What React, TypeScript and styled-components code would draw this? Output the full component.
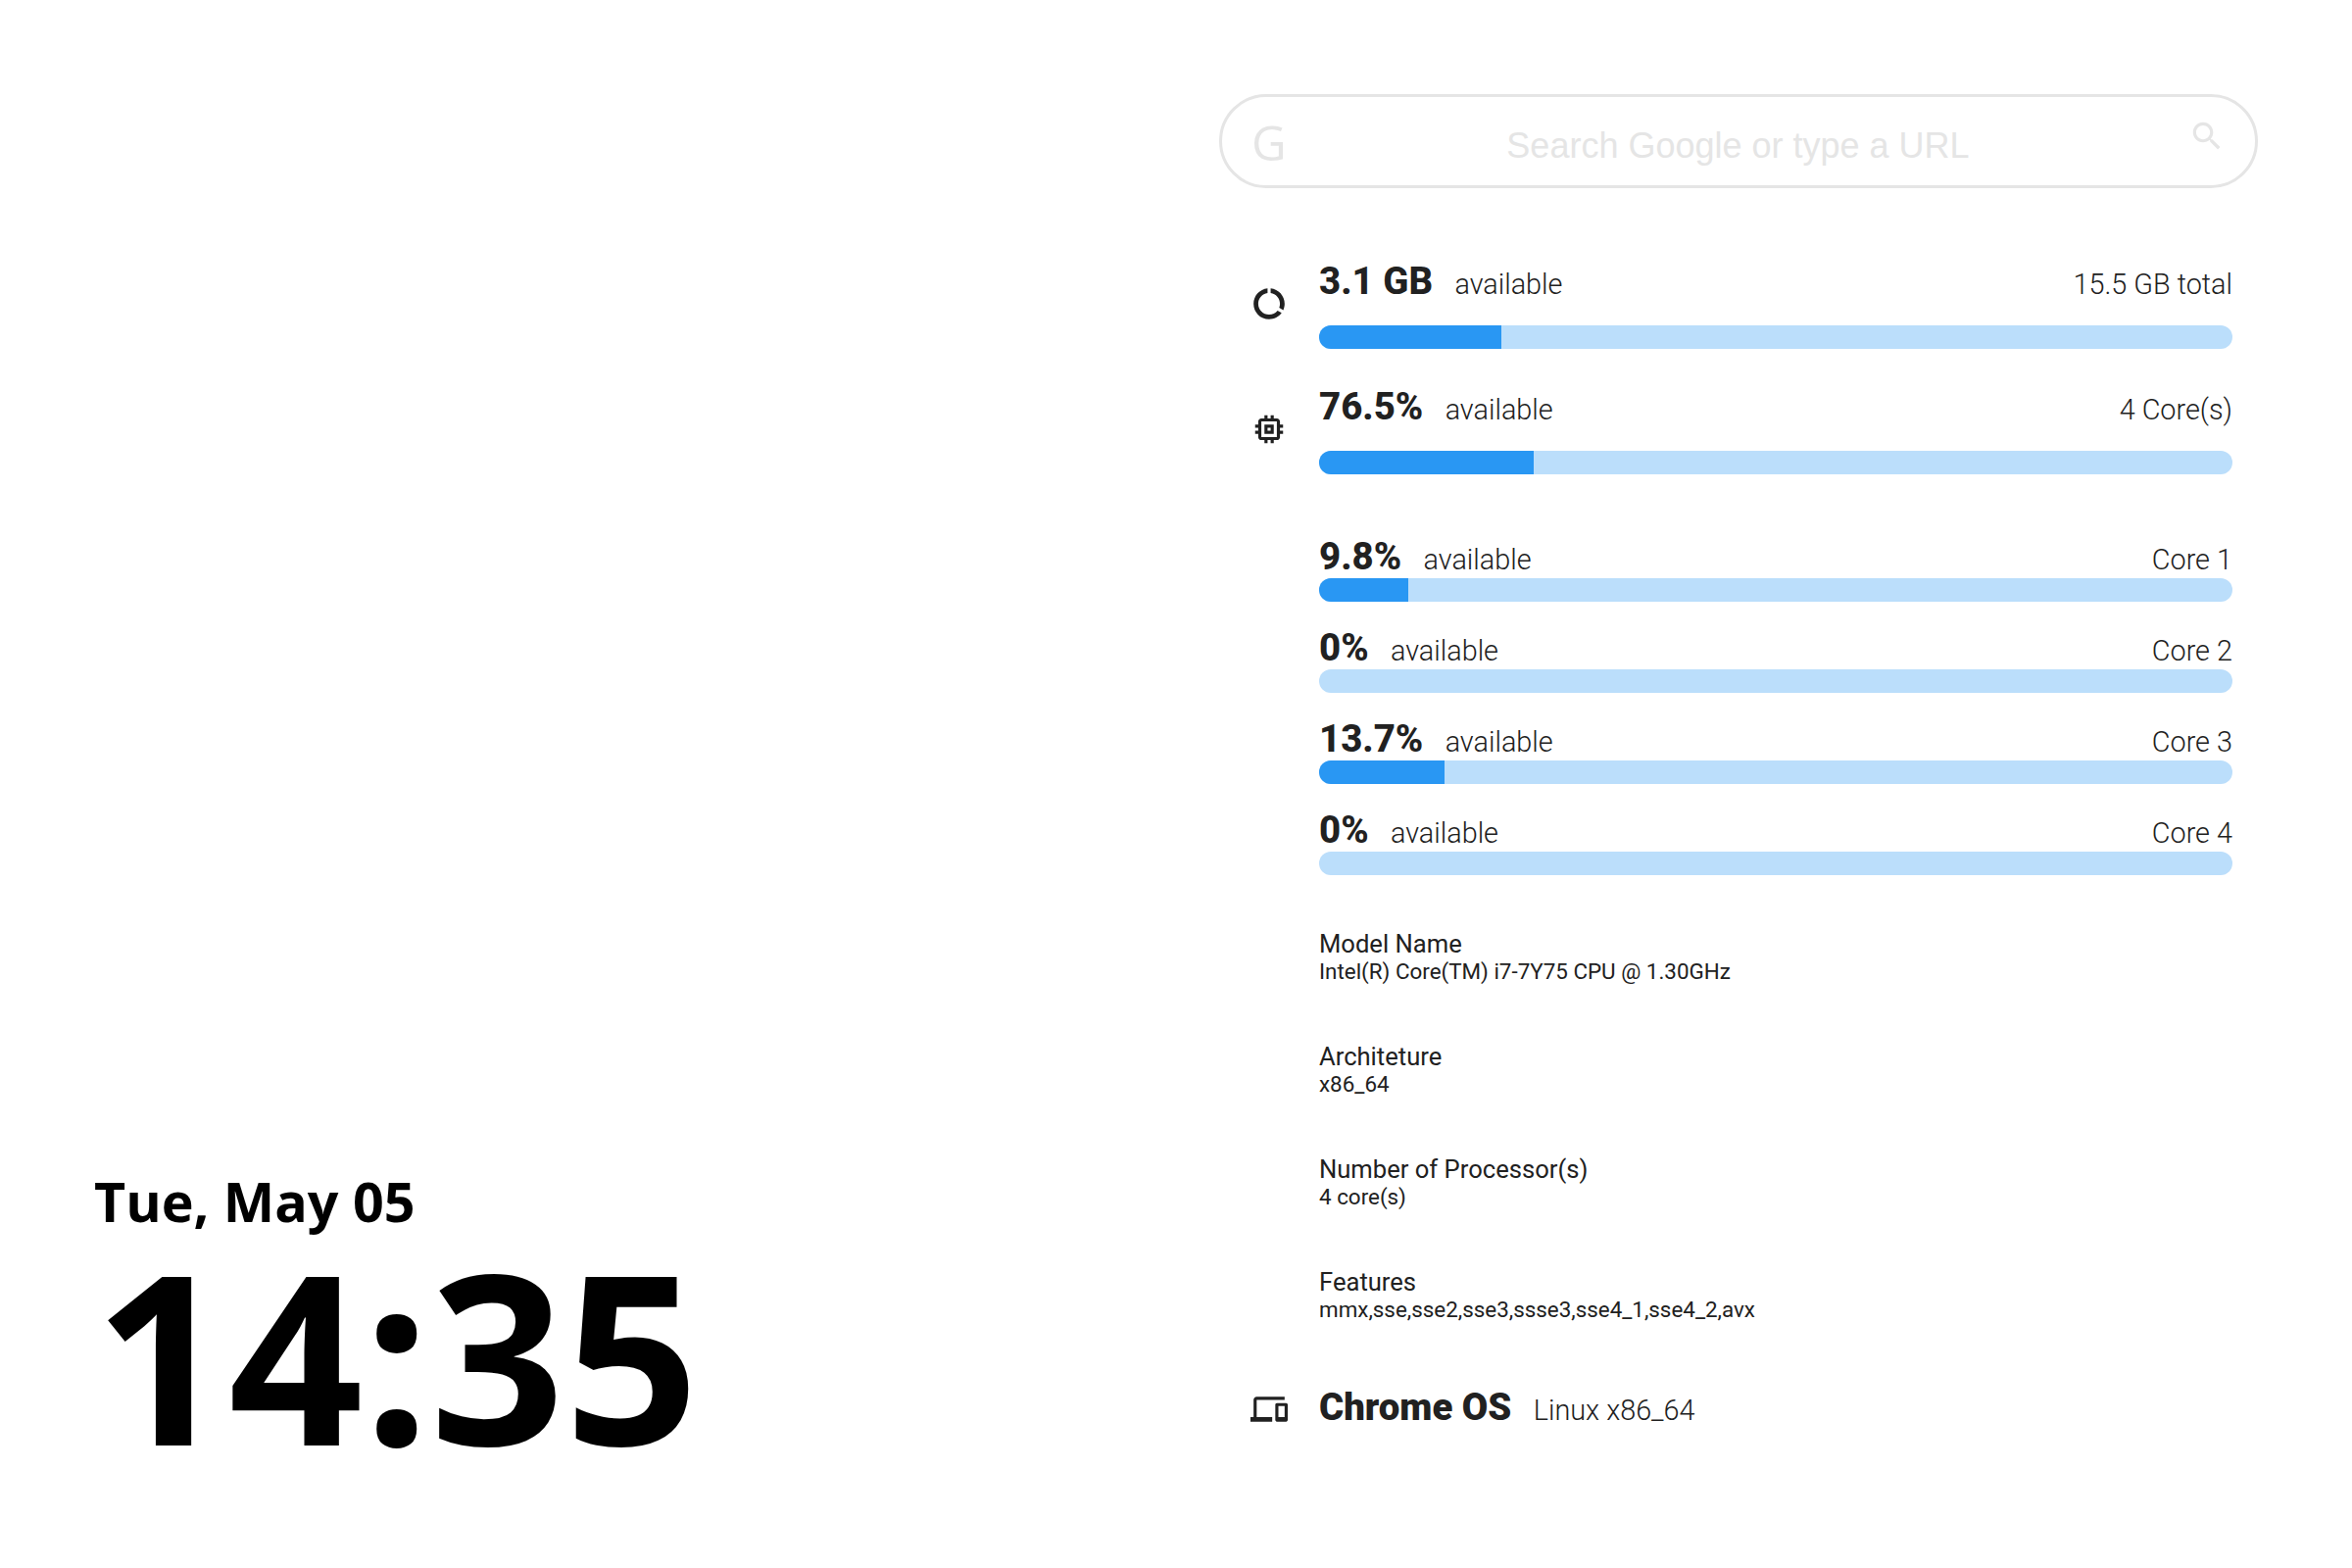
import React from "react";
import styled, { createGlobalStyle } from "styled-components";

const Global = createGlobalStyle`
  html, body { margin: 0; padding: 0; background: #fff; }
  body { font-family: Roboto, "Liberation Sans", sans-serif; color: #212121; }
`;

const Page = styled.div`
  width: 2400px;
  height: 1600px;
  display: flex;
  justify-content: space-between;
  overflow: hidden;
`;

const ClockColumn = styled.section`
  display: flex;
  flex-direction: column;
  justify-content: flex-end;
  padding: 0 0 98px 96px;
  font-family: "Open Sans", sans-serif;
  font-weight: 700;
  color: #000;
`;

const DateLine = styled.div`
  font-size: 55.6px;
  line-height: 64px;
`;

const TimeLine = styled.div`
  font-size: 240px;
  line-height: 240px;
  margin-top: 4px;
`;

const InfoColumn = styled.section`
  width: 1060px;
  margin: 96px 96px 0 0;
`;

const SearchBox = styled.div`
  box-sizing: border-box;
  height: 96px;
  border: 3px solid #e5e5e5;
  border-radius: 48px;
  display: grid;
  grid-template-columns: 72px 1fr 38px;
  align-items: center;
  padding: 0 30px;
  color: #e5e5e5;
`;

const GoogleMark = styled.span`
  font-family: "Open Sans", sans-serif;
  font-size: 49px;
  line-height: 48px;
  margin-top: 2px;
`;

const SearchPlaceholder = styled.span`
  font-family: "Liberation Sans", Arial, sans-serif;
  font-size: 36px;
  text-align: center;
  margin: 10px 35px 0 0;
`;

const SearchIcon = styled.svg`
  width: 38px;
  height: 38px;
  fill: #e5e5e5;
  margin-top: -10px;
`;

const Row = styled.div<{ $mt: number }>`
  display: grid;
  grid-template-columns: 102px 932px;
  margin-top: ${(p) => p.$mt}px;
`;

const IconCell = styled.div`
  display: flex;
  justify-content: center;
  align-items: center;
`;

const Glyph = styled.svg`
  width: 38px;
  height: 38px;
  fill: #212121;
`;

const Header = styled.div<{ $h: number }>`
  display: flex;
  align-items: baseline;
  height: ${(p) => p.$h}px;
  line-height: 47px;
`;

const Value = styled.span`
  font-size: 38.4px;
  font-weight: 800;
`;

const Label = styled.span`
  font-size: 28.8px;
  font-weight: 300;
  margin-left: 22.4px;
`;

const Right = styled.span`
  font-size: 28.8px;
  font-weight: 300;
  margin-left: auto;
`;

const Track = styled.div`
  height: 24px;
  border-radius: 12px;
  background: #bbdefb;
  overflow: hidden;
`;

const Fill = styled.div`
  height: 100%;
  background: #2997f3;
`;

const DetailList = styled.div`
  margin: 55px 0 0 102px;
`;

const Detail = styled.div`
  height: 115px;
`;

const DetailTitle = styled.div`
  font-size: 25.6px;
  line-height: 30px;
`;

const DetailValue = styled.div`
  font-size: 22.4px;
  line-height: 26px;
`;

const OsRow = styled.div`
  display: grid;
  grid-template-columns: 102px 1fr;
  height: 58px;
`;

const OsText = styled.div`
  display: flex;
  align-items: baseline;
  line-height: 56px;
`;

const OsName = styled.span`
  font-size: 38.4px;
  font-weight: 900;
`;

const Bar = ({ pct }: { pct: number }) => (
  <Track>
    <Fill style={{ width: `${pct}%` }} />
  </Track>
);

const cores = [
  { v: "9.8%", p: 9.8, n: "Core 1" },
  { v: "0%", p: 0, n: "Core 2" },
  { v: "13.7%", p: 13.7, n: "Core 3" },
  { v: "0%", p: 0, n: "Core 4" },
];

const details = [
  ["Model Name", "Intel(R) Core(TM) i7-7Y75 CPU @ 1.30GHz"],
  ["Architeture", "x86_64"],
  ["Number of Processor(s)", "4 core(s)"],
  ["Features", "mmx,sse,sse2,sse3,ssse3,sse4_1,sse4_2,avx"],
];

export default function App() {
  return (
    <Page>
      <Global />
      <ClockColumn>
        <DateLine>Tue, May 05</DateLine>
        <TimeLine>14:35</TimeLine>
      </ClockColumn>
      <InfoColumn>
        <SearchBox>
          <GoogleMark>G</GoogleMark>
          <SearchPlaceholder>Search Google or type a URL</SearchPlaceholder>
          <SearchIcon viewBox="0 0 24 24">
            <path d="M15.5 14h-.79l-.28-.27C15.41 12.59 16 11.11 16 9.5 16 5.91 13.09 3 9.5 3S3 5.91 3 9.5 5.91 16 9.5 16c1.61 0 3.09-.59 4.23-1.57l.27.28v.79l5 4.99L20.49 19l-4.99-5zm-6 0C7.01 14 5 11.99 5 9.5S7.01 5 9.5 5 14 7.01 14 9.5 11.99 14 9.5 14z" />
          </SearchIcon>
        </SearchBox>
        <Row $mt={71}>
          <IconCell>
            <Glyph viewBox="0 0 24 24">
              <path d="M13 2.05v3.03c3.39.49 6 3.39 6 6.92 0 .9-.18 1.75-.48 2.54l2.6 1.53c.56-1.24.88-2.62.88-4.07 0-5.18-3.95-9.45-9-9.95zM12 19c-3.87 0-7-3.13-7-7 0-3.53 2.61-6.43 6-6.92V2.05c-5.06.5-9 4.76-9 9.95 0 5.52 4.47 10 9.99 10 3.31 0 6.24-1.61 8.06-4.09l-2.6-1.53C16.17 17.98 14.21 19 12 19z" />
            </Glyph>
          </IconCell>
          <div>
            <Header $h={69}>
              <Value>3.1 GB</Value>
              <Label>available</Label>
              <Right>15.5 GB total</Right>
            </Header>
            <Bar pct={20} />
          </div>
        </Row>
        <Row $mt={35}>
          <IconCell>
            <Glyph viewBox="0 0 24 24">
              <path d="M15 9H9v6h6V9zm-2 4h-2v-2h2v2zm8-2V9h-2V7c0-1.1-.9-2-2-2h-2V3h-2v2h-2V3H9v2H7c-1.1 0-2 .9-2 2v2H3v2h2v2H3v2h2v2c0 1.1.9 2 2 2h2v2h2v-2h2v2h2v-2h2c1.1 0 2-.9 2-2v-2h2v-2h-2v-2h2zm-4 6H7V7h10v10z" />
            </Glyph>
          </IconCell>
          <div>
            <Header $h={69}>
              <Value>76.5%</Value>
              <Label>available</Label>
              <Right>4 Core(s)</Right>
            </Header>
            <Bar pct={23.5} />
          </div>
        </Row>
        {cores.map((c, i) => (
          <Row key={c.n} $mt={i === 0 ? 60 : 23}>
            <span />
            <div>
              <Header $h={46}>
                <Value>{c.v}</Value>
                <Label>available</Label>
                <Right>{c.n}</Right>
              </Header>
              <Bar pct={c.p} />
            </div>
          </Row>
        ))}
        <DetailList>
          {details.map(([t, v]) => (
            <Detail key={t}>
              <DetailTitle>{t}</DetailTitle>
              <DetailValue>{v}</DetailValue>
            </Detail>
          ))}
        </DetailList>
        <OsRow>
          <IconCell>
            <Glyph viewBox="0 0 24 24">
              <path d="M4 6h18V4H4c-1.1 0-2 .9-2 2v11H0v3h14v-3H4V6zm19 2h-6c-.55 0-1 .45-1 1v10c0 .55.45 1 1 1h6c.55 0 1-.45 1-1V9c0-.55-.45-1-1-1zm-1 9h-4v-7h4v7z" />
            </Glyph>
          </IconCell>
          <OsText>
            <OsName>Chrome OS</OsName>
            <Label>Linux x86_64</Label>
          </OsText>
        </OsRow>
      </InfoColumn>
    </Page>
  );
}
